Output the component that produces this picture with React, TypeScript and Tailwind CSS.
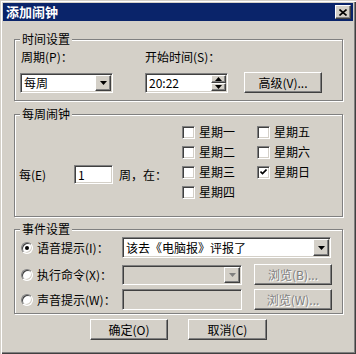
import type { ReactNode } from 'react';

const font = { fontFamily: '"Noto Sans CJK SC", "Liberation Sans", sans-serif' };

const raised =
  'border border-t-white border-l-white border-r-[#404040] border-b-[#404040] shadow-[inset_-1px_-1px_0_#808080] bg-[#d4d0c8]';
const sunken =
  'border border-t-[#808080] border-l-[#808080] border-r-white border-b-white shadow-[inset_1px_1px_0_#404040,inset_-1px_-1px_0_#d4d0c8]';
const disabledText = 'text-[#808080] [text-shadow:1px_1px_0_#fff]';

function Arrow({ down = true, disabled = false }: { down?: boolean; disabled?: boolean }) {
  return (
    <svg width="7" height="4" viewBox="0 0 7 4" className={down ? '' : 'rotate-180'}>
      <path d="M0 0h7L3.5 4z" fill={disabled ? '#808080' : '#000'} />
    </svg>
  );
}

function GroupBox({ title, className, children }: { title: string; className: string; children: ReactNode }) {
  return (
    <div className={`relative w-[329px] border border-[#808080] shadow-[1px_1px_0_#fff,inset_1px_1px_0_#fff] ${className}`}>
      <span className="absolute left-[5px] -top-[8px] bg-[#d4d0c8] px-[2px] leading-[14px]">{title}</span>
      {children}
    </div>
  );
}

function Button({ label, className = '', disabled = false }: { label: string; className?: string; disabled?: boolean }) {
  return (
    <div className={`${raised} flex items-center justify-center leading-[14px] ${disabled ? disabledText : ''} ${className}`}>
      {label}
    </div>
  );
}

function Combo({ value, className, disabled = false }: { value: string; className: string; disabled?: boolean }) {
  return (
    <div className={`${sunken} ${disabled ? 'bg-[#d4d0c8]' : 'bg-white'} flex items-stretch p-[1px] ${className}`}>
      <div className="flex-1 flex items-center pl-[2px] leading-[14px] whitespace-nowrap overflow-hidden">{value}</div>
      <div className={`${raised} w-[16px] flex items-center justify-center`}>
        <Arrow disabled={disabled} />
      </div>
    </div>
  );
}

function CheckBox({ label, checked = false }: { label: string; checked?: boolean }) {
  return (
    <div className="flex items-center h-[20px]">
      <div className={`${sunken} bg-white w-[13px] h-[13px] flex items-center justify-center`}>
        {checked && (
          <svg width="7" height="7" viewBox="0 0 7 7">
            <path d="M0.5 2.5l2 2 4-4" stroke="#000" strokeWidth="1.6" fill="none" />
          </svg>
        )}
      </div>
      <span className="ml-[4px] leading-[14px]">{label}</span>
    </div>
  );
}

function Radio({ checked = false }: { checked?: boolean }) {
  return (
    <div className="w-[12px] h-[12px] rounded-full border border-t-[#808080] border-l-[#808080] border-r-white border-b-white shadow-[inset_1px_1px_0_#404040,inset_-1px_-1px_0_#d4d0c8] bg-white flex items-center justify-center">
      {checked && <div className="w-[4px] h-[4px] rounded-full bg-black" />}
    </div>
  );
}

export default function App() {
  return (
    <div
      style={font}
      className="w-[356px] h-[354px] bg-[#d4d0c8] text-[12px] text-black p-[3px] shadow-[inset_1px_1px_0_#d4d0c8,inset_2px_2px_0_#fff,inset_-1px_-1px_0_#404040,inset_-2px_-2px_0_#808080] overflow-hidden"
    >
      {/* Title bar */}
      <div className="h-[18px] bg-[#0a246a] flex items-center justify-between pl-[3px] pr-[2px]">
        <span className="text-white font-bold text-[13px] leading-[16px]">添加闹钟</span>
        <div className={`${raised} w-[16px] h-[14px] flex items-center justify-center`}>
          <svg width="8" height="7" viewBox="0 0 8 7">
            <path d="M0.5 0.5l7 6M7.5 0.5l-7 6" stroke="#000" strokeWidth="1.6" />
          </svg>
        </div>
      </div>

      <div className="flex flex-col pl-[11px]">
        {/* 时间设置 */}
        <GroupBox title="时间设置" className="mt-[18px] h-[62px]">
          <div className="flex items-end pl-[5px] pt-[10px]">
            <div className="flex flex-col w-[93px]">
              <span className="pl-[1px] leading-[14px]">周期(P)：</span>
              <Combo value="每周" className="mt-[9px] h-[20px] w-[93px]" />
            </div>
            <div className="flex flex-col ml-[32px]">
              <span className="leading-[14px]">开始时间(S)：</span>
              <div className={`${sunken} bg-white mt-[9px] h-[20px] w-[83px] flex items-stretch p-[1px]`}>
                <div className="flex-1 flex items-center pl-[2px] leading-[14px]">20:22</div>
                <div className="flex flex-col w-[15px]">
                  <div className={`${raised} flex-1 flex items-center justify-center`}>
                    <Arrow down={false} />
                  </div>
                  <div className={`${raised} flex-1 flex items-center justify-center`}>
                    <Arrow />
                  </div>
                </div>
              </div>
            </div>
            <Button label="高级(V)..." className="ml-[16px] w-[78px] h-[21px]" />
          </div>
        </GroupBox>

        {/* 每周闹钟 */}
        <GroupBox title="每周闹钟" className="mt-[13px] h-[103px]">
          <div className="flex pl-[4px] pt-[7px]">
            <div className="flex items-center mt-[43px] h-[19px] self-start">
              <span className="w-[55px] leading-[14px]">每(E)</span>
              <div className={`${sunken} bg-white w-[39px] h-[19px] flex items-center pl-[3px] leading-[14px]`}>1</div>
              <span className="ml-[6px] w-[63px] leading-[14px]">周，在：</span>
            </div>
            <div className="grid grid-cols-[75px_auto] grid-flow-col grid-rows-4">
              <CheckBox label="星期一" />
              <CheckBox label="星期二" />
              <CheckBox label="星期三" />
              <CheckBox label="星期四" />
              <CheckBox label="星期五" />
              <CheckBox label="星期六" />
              <CheckBox label="星期日" checked />
            </div>
          </div>
        </GroupBox>

        {/* 事件设置 */}
        <GroupBox title="事件设置" className="mt-[12px] h-[85px]">
          <div className="flex flex-col pl-[6px] pt-[7px]">
            <div className="flex items-center h-[21px]">
              <Radio checked />
              <span className="ml-[4px] w-[85px] leading-[14px]">语音提示(I)：</span>
              <Combo value="该去《电脑报》评报了" className="h-[21px] w-[209px]" />
            </div>
            <div className="flex items-center h-[21px] mt-[6px]">
              <Radio />
              <span className="ml-[4px] w-[85px] leading-[14px]">执行命令(X)：</span>
              <Combo value="" disabled className="h-[20px] w-[120px]" />
              <Button label="浏览(B)..." disabled className="ml-[12px] w-[78px] h-[21px]" />
            </div>
            <div className="flex items-center h-[21px] mt-[4px]">
              <Radio />
              <span className="ml-[4px] w-[85px] leading-[14px]">声音提示(W)：</span>
              <div className={`${sunken} bg-[#d4d0c8] h-[21px] w-[120px]`} />
              <Button label="浏览(W)..." disabled className="ml-[12px] w-[78px] h-[21px]" />
            </div>
          </div>
        </GroupBox>

        {/* Buttons */}
        <div className="flex mt-[5px] ml-[76px]">
          <Button label="确定(O)" className="w-[78px] h-[21px]" />
          <Button label="取消(C)" className="ml-[20px] w-[79px] h-[21px]" />
        </div>
      </div>
    </div>
  );
}
